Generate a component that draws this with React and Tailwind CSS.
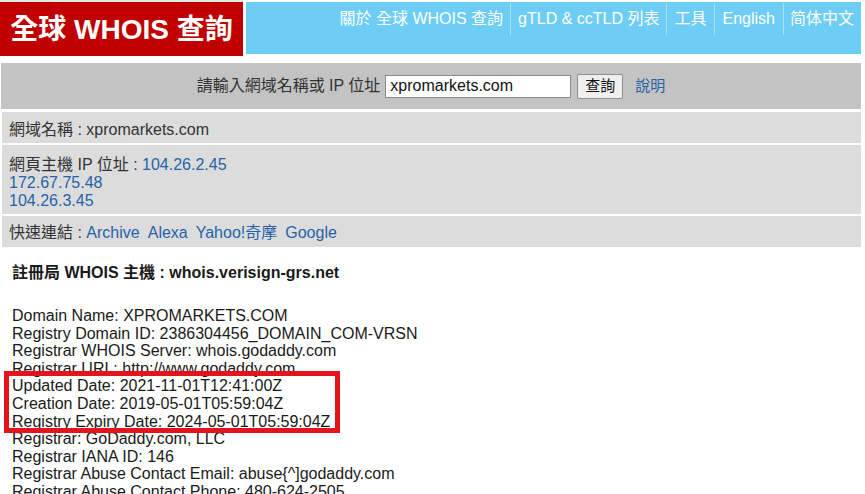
export default function App() {
  const font = "font-[family-name:Liberation_Sans,Noto_Sans_CJK_TC,sans-serif]";
  const link = "text-[#2563a8]";
  return (
    <div className={`${font} w-[865px] h-[494px] overflow-hidden bg-white text-[16px] text-[#333]`}>
      <div className="w-[861px]">
        {/* Header */}
        <div className="flex h-[56px]">
          <div className="w-[243px] h-[56px] bg-[#c00000] border-t-2 border-[#e8e8e8] flex items-center justify-center pt-[2px]">
            <span className="text-white font-bold text-[28px] leading-none">全球 WHOIS 查詢</span>
          </div>
          <div className="ml-[3px] mt-[2px] h-[52px] flex-1 bg-[#6dcdf5] flex justify-end items-start pr-[4px]">
            <div className="flex items-stretch h-[32px] mt-[1px] text-white text-[16px] leading-none">
              <span className="flex items-center px-[7px]">關於 全球 WHOIS 查詢</span>
              <span className="flex items-center px-[7px] border-l border-[#a7e1f9]">gTLD &amp; ccTLD 列表</span>
              <span className="flex items-center px-[7px] border-l border-[#a7e1f9]">工具</span>
              <span className="flex items-center px-[8px] border-l border-[#a7e1f9]">English</span>
              <span className="flex items-center pl-[6px] pr-[3px] border-l border-[#a7e1f9]">简体中文</span>
            </div>
          </div>
        </div>

        {/* Search bar */}
        <div className="mt-[7px] ml-[1px] h-[46px] bg-[#c3c3c3] flex items-center justify-center gap-[5px]">
          <span>請輸入網域名稱或 IP 位址</span>
          <div className="w-[186px] h-[23px] bg-white border border-[#8a8a8a] flex items-center px-[4px] text-[#111]">xpromarkets.com</div>
          <button className="ml-[1px] w-[46px] h-[25px] bg-[#efefef] border border-[#8f8f8f] rounded-[2px] text-[15px] text-[#111] flex items-center justify-center">查詢</button>
          <span className={`ml-[7px] text-[15px] ${link}`}>說明</span>
        </div>

        {/* Info rows */}
        <div className="mt-[3px] ml-[2px] bg-[#dcdcdc] h-[31px] px-[7px] flex items-center pt-[5px]">
          <span>網域名稱 : xpromarkets.com</span>
        </div>
        <div className="mt-[2px] ml-[2px] bg-[#dcdcdc] h-[69px] px-[7px] pt-[11px] leading-[18.2px]">
          <div>網頁主機 IP 位址 : <span className={link}>104.26.2.45</span></div>
          <div className={link}>172.67.75.48</div>
          <div className={link}>104.26.3.45</div>
        </div>
        <div className="mt-[2px] ml-[2px] bg-[#dcdcdc] h-[31px] px-[7px] flex items-center pt-[3px]">
          <span>
            快速連結 : <span className={link}>Archive</span>
            <span className={`ml-[8px] ${link}`}>Alexa</span>
            <span className={`ml-[8px] ${link}`}>Yahoo!奇摩</span>
            <span className={`ml-[8px] ${link}`}>Google</span>
          </span>
        </div>

        {/* WHOIS */}
        <div className="px-[12px] text-[#1a1a1a]">
          <div className="mt-[17px] font-bold text-[16px] leading-[18px]">註冊局 WHOIS 主機 : whois.verisign-grs.net</div>
          <div className="mt-[25px] leading-[17.6px]">
            <div>Domain Name: XPROMARKETS.COM</div>
            <div>Registry Domain ID: 2386304456_DOMAIN_COM-VRSN</div>
            <div>Registrar WHOIS Server: whois.godaddy.com</div>
            <div>Registrar URL: http://www.godaddy.com</div>
            <div className="relative">
              <div>Updated Date: 2021-11-01T12:41:00Z</div>
              <div>Creation Date: 2019-05-01T05:59:04Z</div>
              <div>Registry Expiry Date: 2024-05-01T05:59:04Z</div>
              <div className="absolute left-[-8px] top-[-6px] w-[336px] h-[62px] border-[5px] border-[#e3141c]"></div>
            </div>
            <div>Registrar: GoDaddy.com, LLC</div>
            <div>Registrar IANA ID: 146</div>
            <div>Registrar Abuse Contact Email: abuse{"{^]"}godaddy.com</div>
            <div>Registrar Abuse Contact Phone: 480-624-2505</div>
          </div>
        </div>
      </div>
    </div>
  );
}
